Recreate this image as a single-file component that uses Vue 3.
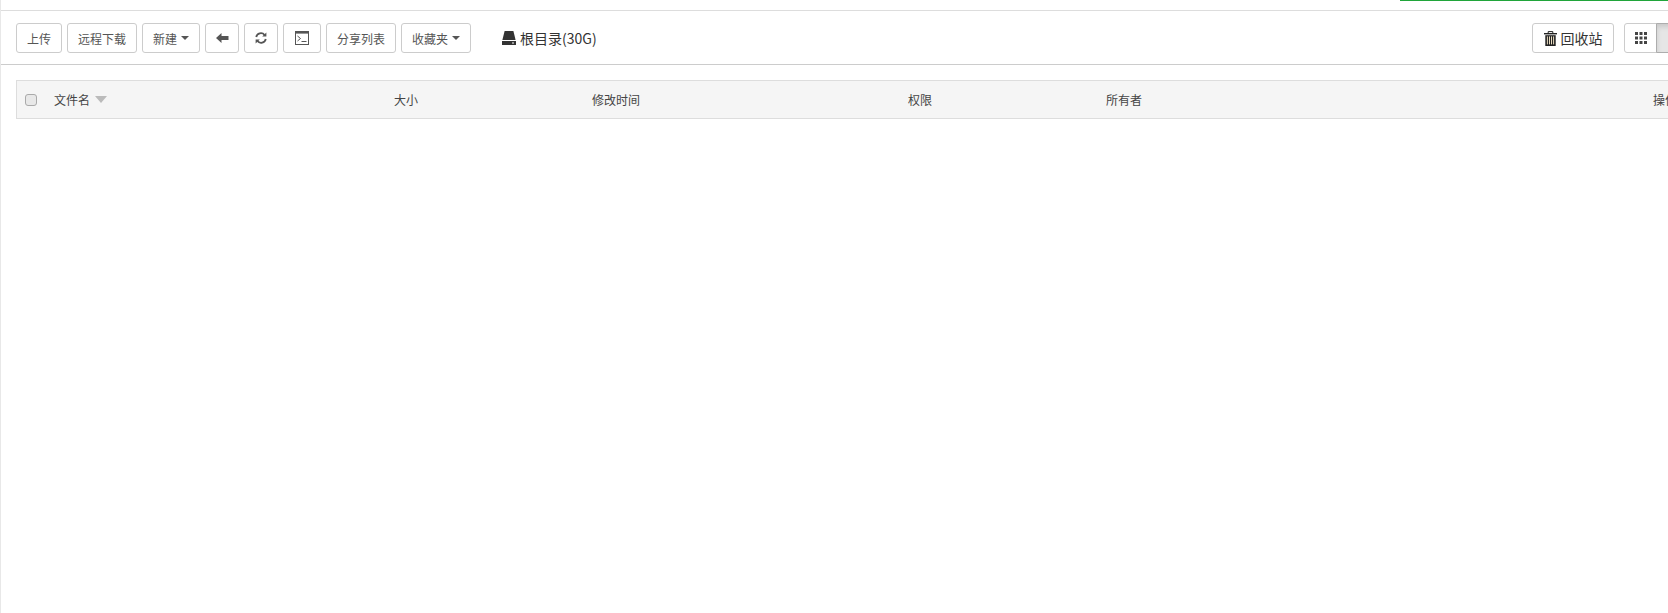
<script setup>
const columns = ['大小', '修改时间', '权限', '所有者', '操作']
</script>

<template>
  <div class="page">
    <div class="topbar"><div class="progress"></div></div>
    <div class="toolbar">
      <div class="group">
        <button class="btn">上传</button>
        <button class="btn">远程下载</button>
        <button class="btn">新建<span class="caret"></span></button>
        <button class="btn icon-btn" aria-label="返回">
          <svg width="13" height="10" viewBox="0 0 13 10"><path d="M0 5 5.5 0v3H12.5v4H5.5v3z" fill="#555"/></svg>
        </button>
        <button class="btn icon-btn" aria-label="刷新">
          <svg width="12" height="12" viewBox="0 0 12 12" fill="none" stroke="#555" stroke-width="1.8"><path d="M1.2 5A4.8 4.8 0 0 1 9.6 3"/><path d="M10.8 7A4.8 4.8 0 0 1 2.4 9"/><path d="M11.4 .4v4.2H7.2z" fill="#555" stroke="none"/><path d="M.6 11.6V7.4h4.2z" fill="#555" stroke="none"/></svg>
        </button>
        <button class="btn icon-btn term" aria-label="终端">
          <svg width="14" height="14" viewBox="0 0 14 14"><rect x=".5" y=".5" width="13" height="13" fill="#fff" stroke="#555"/><rect x="0" y="0" width="14" height="2.6" fill="#555"/><path d="M2.5 5 5.5 7.5 2.5 10" fill="none" stroke="#555"/><path d="M6.5 10.5h5" stroke="#555"/></svg>
        </button>
        <button class="btn">分享列表</button>
        <button class="btn">收藏夹<span class="caret"></span></button>
        <div class="crumb">
          <svg width="14" height="14" viewBox="0 0 14 14"><path d="M2.6 0h8.8L13.6 9H.4z" fill="#333"/><rect x="0" y="10" width="14" height="4" fill="#333"/><rect x="10" y="11.5" width="2" height="1" fill="#fff"/></svg>
          <span>根目录(30G)</span>
        </div>
      </div>
      <div class="group right">
        <button class="btn recycle">
          <svg width="13" height="15" viewBox="0 0 13 15"><path d="M4.2 2V.6h4.6V2" fill="none" stroke="#222"/><path d="M0 2h13v1.4H0z" fill="#222"/><path d="M1.3 4.2h10.4V15H1.3z" fill="#222"/><path d="M3.4 5.4v8M5.5 5.4v8M7.5 5.4v8M9.6 5.4v8" stroke="#e9dcc0" stroke-width="1"/></svg>
          <span>回收站</span>
        </button>
        <div class="switch">
          <button class="btn seg" aria-label="图标视图">
            <svg width="12" height="12" viewBox="0 0 12 12" fill="#444"><rect width="3" height="3"/><rect x="4.5" width="3" height="3"/><rect x="9" width="3" height="3"/><rect y="4.5" width="3" height="3"/><rect x="4.5" y="4.5" width="3" height="3"/><rect x="9" y="4.5" width="3" height="3"/><rect y="9" width="3" height="3"/><rect x="4.5" y="9" width="3" height="3"/><rect x="9" y="9" width="3" height="3"/></svg>
          </button>
          <button class="btn seg active" aria-label="列表视图"></button>
        </div>
      </div>
    </div>
    <div class="table-head">
      <span class="check"></span>
      <span class="cell">文件名<span class="sort"></span></span>
      <span v-for="c in columns" :key="c" class="cell">{{ c }}</span>
    </div>
  </div>
</template>

<style>
html, body { margin: 0; background: #fff; overflow: hidden; }
</style>

<style scoped>
.page {
  width: 1719px;
  height: 613px;
  box-sizing: border-box;
  border-left: 1px solid #e8e8e8;
  font-family: "Noto Sans CJK SC", "Liberation Sans", sans-serif;
  font-size: 12px;
  color: #333;
  overflow: hidden;
}
.topbar {
  height: 10px;
  border-bottom: 1px solid #ddd;
  overflow: hidden;
}
.progress {
  width: 320px;
  height: 1px;
  margin-left: 1399px;
  background: #20a53a;
}
.toolbar {
  padding: 12px 15px 0;
  height: 41px;
  border-bottom: 1px solid #ccc;
  display: flex;
  justify-content: space-between;
  align-items: flex-start;
}
.group { display: flex; gap: 5px; align-items: center; }
.group.right { gap: 10px; padding-right: 15px; }
.btn {
  height: 30px;
  box-sizing: border-box;
  padding: 0 10px;
  background: #fff;
  border: 1px solid #ccc;
  border-radius: 3px;
  font: inherit;
  color: #555;
  display: inline-flex;
  align-items: center;
  justify-content: center;
  white-space: nowrap;
}
.icon-btn { width: 34px; padding: 0; }
.term { width: 38px; }
.caret {
  display: inline-block;
  margin-left: 4px;
  border-top: 4px solid #555;
  border-left: 4px solid transparent;
  border-right: 4px solid transparent;
}
.crumb {
  margin-left: 26px;
  display: flex;
  align-items: center;
  gap: 4px;
  font-size: 14px;
  color: #333;
}
.recycle {
  font-size: 14px;
  color: #333;
  gap: 4px;
  width: 82px;
  padding: 0;
}
.switch { display: flex; }
.seg { width: 33px; padding: 0; }
.seg:first-child { border-radius: 3px 0 0 3px; }
.seg.active {
  margin-left: -1px;
  background: #e6e6e6;
  border-color: #adadad;
  border-radius: 0 3px 3px 0;
  box-shadow: inset 0 3px 5px rgba(0, 0, 0, .125);
}
.table-head {
  margin: 15px 0 0 15px;
  height: 39px;
  box-sizing: border-box;
  border: 1px solid #ddd;
  background: #f5f5f5;
  display: grid;
  grid-template-columns: 37px 340px 198px 316px 198px 547px 1fr;
  align-items: center;
}
.check {
  width: 12px;
  height: 12px;
  box-sizing: border-box;
  margin-left: 8px;
  border: 1px solid #aaa;
  border-radius: 3px;
  background: #e8e8e8;
}
.cell { display: flex; align-items: center; color: #444; }
.sort {
  margin-left: 5px;
  border-top: 7px solid #bbb;
  border-left: 6px solid transparent;
  border-right: 6px solid transparent;
}
</style>
